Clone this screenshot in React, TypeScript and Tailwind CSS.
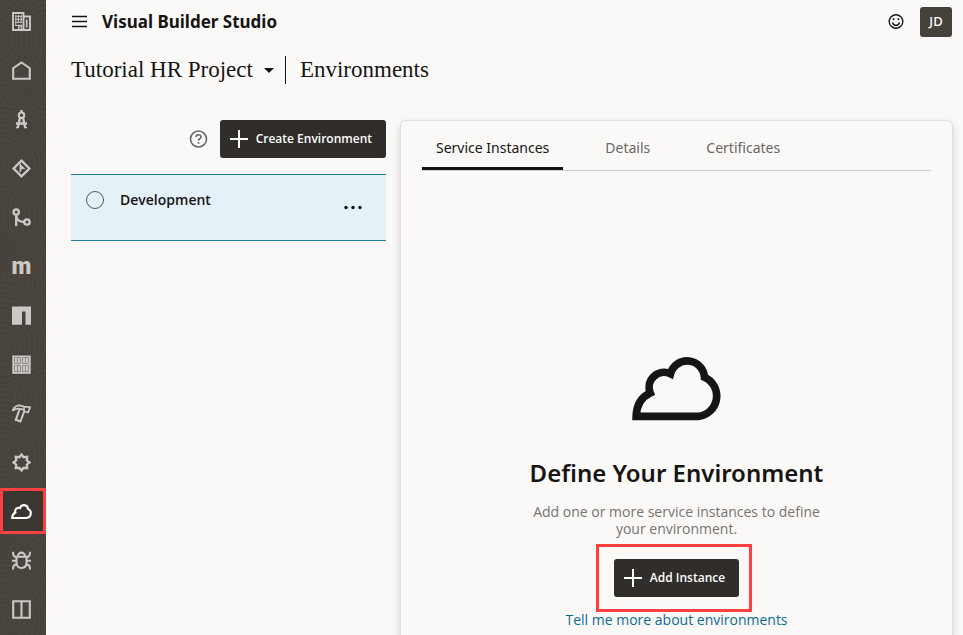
import React from "react";

const sans = "font-['Noto_Sans','Open_Sans',sans-serif]";

function Cloud({ className, strokeWidth }: { className: string; strokeWidth: number }) {
  return (
    <svg className={`overflow-visible ${className}`} viewBox="0 0 89 65" fill="none" stroke="currentColor" strokeWidth={strokeWidth} strokeMiterlimit={10} aria-hidden="true">
      <path d="M4.2 60.3C4.5 49 9.5 41 18.2 37A15 15 0 0 1 38.5 17.8A17.3 17.3 0 0 1 72.5 21.3A20.4 20.4 0 0 1 66 60.3Z" />
    </svg>
  );
}

function Glyph({ children }: { children: React.ReactNode }) {
  return (
    <svg className="size-[19px] overflow-visible" viewBox="0 0 19 19" fill="none" stroke="currentColor" strokeWidth={2.1} aria-hidden="true">
      {children}
    </svg>
  );
}

const starPoints = Array.from({ length: 16 }, (_, i) => {
  const r = i % 2 === 0 ? 8 : 5.7;
  const a = (i * Math.PI) / 8;
  return `${(9.5 + r * Math.sin(a)).toFixed(2)},${(9.5 - r * Math.cos(a)).toFixed(2)}`;
}).join(" ");

const items: { label: string; icon: React.ReactNode; active?: boolean }[] = [
  {
    label: "Organization",
    icon: (
      <Glyph>
        <path d="M1 1h10.5v17H1zM11.5 4.500h6.500V18h-6.500" strokeWidth={1.900} />
        <path d="M3 4.300h7M3 7.300h7M3 10.300h7M3 13.500h3M6.400 3v8M9.200 3v8M3.800 3v11" strokeWidth={1} />
        <path d="M6.800 17.500v-4h2.600v4" strokeWidth={1.400} />
        <path d="M14.700 7.500v8" strokeWidth={1.600} />
      </Glyph>
    ),
  },
  {
    label: "Project Home",
    icon: (
      <Glyph>
        <path d="M1.200 17.800V7.200L9.500 1.500l8.300 5.700v10.600z" />
      </Glyph>
    ),
  },
  {
    label: "Workspaces",
    icon: (
      <Glyph>
        <circle cx="9.500" cy="5.200" r="2.700" />
        <path d="M9.500 0v2.600M8 7.800L5.800 17.500M11 7.800l2.200 9.700M4 13.500h11" strokeWidth={2.400} />
        <path d="M4 17.600h3M12 17.600h3" strokeWidth={1.400} />
      </Glyph>
    ),
  },
  {
    label: "Git",
    icon: (
      <Glyph>
        <path d="M9.500 1.600l7.900 7.900-7.900 7.900-7.900-7.900z" strokeWidth={2.300} />
        <path d="M8.200 5l5.300 5H10l-1.800 3z" fill="currentColor" stroke="none" />
        <path d="M8.300 5v8" strokeWidth={1.300} />
      </Glyph>
    ),
  },
  {
    label: "Merge Requests",
    icon: (
      <Glyph>
        <circle cx="4.200" cy="4" r="2.700" strokeWidth={2.300} />
        <circle cx="15" cy="14" r="2.700" strokeWidth={2.300} />
        <path d="M4.200 6.800V18M4.200 7c.3 4.400 3.200 7 8 7" strokeWidth={2.300} />
      </Glyph>
    ),
  },
  { label: "Maven", icon: <span className="font-[Roboto,sans-serif] text-[23px] leading-[19px] font-black">m</span> },
  {
    label: "NPM",
    icon: (
      <Glyph>
        <path d="M0 .5h19v18.300h-5.500V5.500h-3.500v13.300H0z" fill="currentColor" stroke="none" />
      </Glyph>
    ),
  },
  {
    label: "Docker",
    icon: (
      <Glyph>
        <path d="M.3.5h18.400v18.300H.3z" fill="currentColor" stroke="none" />
        <path d="M2.500 2.500h6v6h-6zM10.500 2.500h6v6h-6zM2.500 10.500h6v6h-6zM10.500 10.500h6v6h-6zM5.500 3v5M13.500 3v5M5.500 11v5M13.500 11v5" stroke="#8a8682" strokeWidth={0.900} />
      </Glyph>
    ),
  },
  {
    label: "Builds",
    icon: (
      <Glyph>
        <path d="M.8 6.400C2 3.500 4.500 1.400 7.500 1.400l4.500 1.300 6 .5-1.800 5.300-3.400-1-1-1.700-3.400-.9C6 4.300 3.500 4.600.8 6.400z" strokeWidth={1.800} strokeLinejoin="round" />
        <path d="M7.500 5.500L3.800 15.800l4.600 1.700 4-10.500" strokeWidth={2.100} />
        <path d="M12.500 3l-.9 3" strokeWidth={1.500} />
      </Glyph>
    ),
  },
  {
    label: "Releases",
    icon: (
      <Glyph>
        <polygon points={starPoints} strokeWidth={2.300} />
      </Glyph>
    ),
  },
  { label: "Environments", active: true, icon: <Cloud className="h-[15px] w-[21px]" strokeWidth={9} /> },
  {
    label: "Issues",
    icon: (
      <Glyph>
        <path d="M4.500 5.800h10v6c0 3.200-2 5.200-5 5.200s-5-2-5-5.200zM6 5.500c0-2.500 1.400-3.900 3.500-3.900S13 3 13 5.500" />
        <path d="M1.100.8v1.700c0 2 1.400 3.500 3.400 3.800M17.900.8v1.700c0 2-1.400 3.500-3.400 3.800M0 9.800h4.500M14.500 9.800H19M1.100 18.500v-1.400c0-2 1.400-3.500 3.400-3.800M17.900 18.500v-1.400c0-2-1.400-3.500-3.400-3.800" strokeWidth={2} />
      </Glyph>
    ),
  },
  {
    label: "Boards",
    icon: (
      <Glyph>
        <path d="M1.200 1.200h16.600v16.600H1.200zM9.500 1.200v16.600" />
      </Glyph>
    ),
  },
];

const ripples = [
  { x: 60, y: 60, n: 14 },
  { x: -8, y: 40, n: 10 },
  { x: 0, y: 165, n: 12 },
  { x: 54, y: 215, n: 10 },
  { x: 62, y: 290, n: 12 },
  { x: 0, y: 345, n: 13 },
  { x: 50, y: 400, n: 7 },
  { x: 0, y: 455, n: 11 },
  { x: 56, y: 570, n: 10 },
  { x: 0, y: 620, n: 12 },
];

function Ripples() {
  return (
    <svg className="absolute inset-0 size-full" aria-hidden="true">
      {ripples.map((c) => (
        <g key={`${c.x}-${c.y}`} stroke="#4f4942" strokeWidth={1} fill="#47423b">
          {Array.from({ length: c.n }, (_, i) => (
            <circle key={i} cx={c.x} cy={c.y} r={(c.n - i) * 5} />
          ))}
        </g>
      ))}
    </svg>
  );
}

function Plus() {
  return (
    <svg className="size-[18px] shrink-0" viewBox="0 0 18 18" stroke="currentColor" strokeWidth={2} aria-hidden="true">
      <path d="M9 0v18M0 9h18" />
    </svg>
  );
}

function DarkButton({ children }: { children: React.ReactNode }) {
  return (
    <button className="flex h-[38px] items-center gap-2 rounded-[3px] bg-[#312d2a] pr-3.5 pl-2.5 font-['Open_Sans',sans-serif] text-[12px] font-semibold whitespace-nowrap text-white">
      <Plus />
      {children}
    </button>
  );
}

export default function App() {
  return (
    <div className={`flex h-screen overflow-hidden bg-[#fbf9f8] text-[#161513] ${sans}`}>
      <nav aria-label="Project" className="relative w-[46px] shrink-0 bg-[#47423b] text-[#cbc8c5]">
        <Ripples />
        <ul className="relative flex flex-col gap-1.5">
          {items.map((item) => (
            <li key={item.label} className="relative h-[43px]">
              {item.active && <span className="absolute inset-x-0 -top-0.5 -bottom-px border-3 border-[#fb4141] bg-[#3b3630]" />}
              <a href="#" aria-label={item.label} className={`relative flex h-full items-center justify-center pr-[3px] ${item.active ? "text-white" : ""}`}>
                {item.icon}
              </a>
            </li>
          ))}
        </ul>
      </nav>

      <div className="flex min-w-0 flex-1 flex-col pr-2.5 pl-[25px]">
        <header className="flex h-[43px] shrink-0 items-center pr-px">
          <button aria-label="Menu" className="mr-[15px]">
            <svg className="block size-4" viewBox="0 0 16 16" stroke="currentColor" strokeWidth={1.300} aria-hidden="true">
              <path d="M1 2.500h15M1 7.500h15M1 12.500h15" />
            </svg>
          </button>
          <span className="text-[17px] font-bold">Visual Builder Studio</span>
          <button aria-label="Feedback" className="mr-4 ml-auto">
            <svg className="block size-4" viewBox="0 0 16 16" fill="none" stroke="currentColor" strokeWidth={1.400} aria-hidden="true">
              <circle cx="8" cy="7.500" r="6.800" />
              <path d="M4.500 8.500c.6 2 1.900 2.900 3.500 2.900s2.900-.9 3.500-2.900" />
              <path d="M5.600 4.300v1.800M10.400 4.300v1.800" strokeWidth={1.600} />
            </svg>
          </button>
          <button className="h-[30px] w-8 rounded-[3px] bg-[#47413b] text-[13px] font-medium text-white">JD</button>
        </header>

        <div className="flex h-[54px] shrink-0 items-center font-['Liberation_Serif',serif] text-[23px]">
          <button className="flex items-center gap-[11px]">
            Tutorial HR Project
            <span className="border-x-5 border-t-5 border-x-transparent border-t-[#161513]" />
          </button>
          <span className="mr-3.5 ml-[11px] h-7 w-px bg-[#161513]" />
          <h1>Environments</h1>
        </div>

        <main className="flex min-h-0 flex-1 gap-3.5 pt-[23px]">
          <section className="w-[315px] shrink-0">
            <div className="flex items-center justify-end gap-3">
              <button aria-label="Help" className="text-[#6b6763]">
                <svg className="block size-[19px]" viewBox="0 0 19 19" fill="none" stroke="currentColor" strokeWidth={1.600} aria-hidden="true">
                  <circle cx="9.500" cy="9" r="8" />
                  <path d="M7 7.100c0-1.500 1-2.400 2.500-2.400S12 5.600 12 6.900c0 1.700-2.500 1.800-2.500 3.900" />
                  <path d="M9.500 12.100v1.700" strokeWidth={1.800} />
                </svg>
              </button>
              <DarkButton>Create Environment</DarkButton>
            </div>
            <div className="mt-4 flex h-[67px] items-start border-y border-[#227e9e] bg-[#e4f1f7] px-[15px] pt-4">
              <input id="development" type="radio" name="environment" className="size-[18px] appearance-none rounded-full border border-[#5b5854]" />
              <label htmlFor="development" className="ml-4 font-['Open_Sans',sans-serif] text-[14px] leading-[18px] font-semibold">Development</label>
              <button aria-label="More actions" className="mt-3 mr-2 ml-auto">
                <svg className="block h-2 w-5" viewBox="0 0 20 8" fill="currentColor" aria-hidden="true">
                  <circle cx="3" cy="4.500" r="1.700" />
                  <circle cx="10" cy="4.500" r="1.700" />
                  <circle cx="17" cy="4.500" r="1.700" />
                </svg>
              </button>
            </div>
          </section>

          <section className="min-w-0 flex-1 rounded-t-md border border-b-0 border-[#e2e0df] bg-[#fbf9f8] px-[21px] shadow-[0_4px_8px_rgba(0,0,0,0.16)]">
            <div role="tablist" className="flex h-[50px] gap-7 border-b border-[#d0cecc] text-[14px] text-[#6b6763]">
              <button role="tab" aria-selected="true" className="border-b-3 border-[#161513] px-3.5 pt-[7px] text-[#161513]">Service Instances</button>
              <button role="tab" aria-selected="false" className="px-3.5 pt-1">Details</button>
              <button role="tab" aria-selected="false" className="px-3.5 pt-1">Certificates</button>
            </div>
            <div className="flex flex-col items-center pt-[185px] text-center">
              <Cloud className="h-[65px] w-[89px]" strokeWidth={7.700} />
              <h2 className="mt-[34px] text-[24px] leading-9 font-semibold">Define Your Environment</h2>
              <p className="mt-3 max-w-[300px] font-['Open_Sans',sans-serif] text-[14px] leading-[17px] text-[#77736f]">Add one or more service instances to define your environment.</p>
              <div className="relative mt-[22px]">
                <DarkButton>Add Instance</DarkButton>
                <span className="pointer-events-none absolute -top-[15px] -right-[13px] -bottom-[15px] -left-[18px] border-3 border-[#fb4141]" />
              </div>
              <a href="#" className="mt-[13px] font-['Open_Sans',sans-serif] text-[14px] leading-5 text-[#0b6b8f]">Tell me more about environments</a>
            </div>
          </section>
        </main>
      </div>
    </div>
  );
}
